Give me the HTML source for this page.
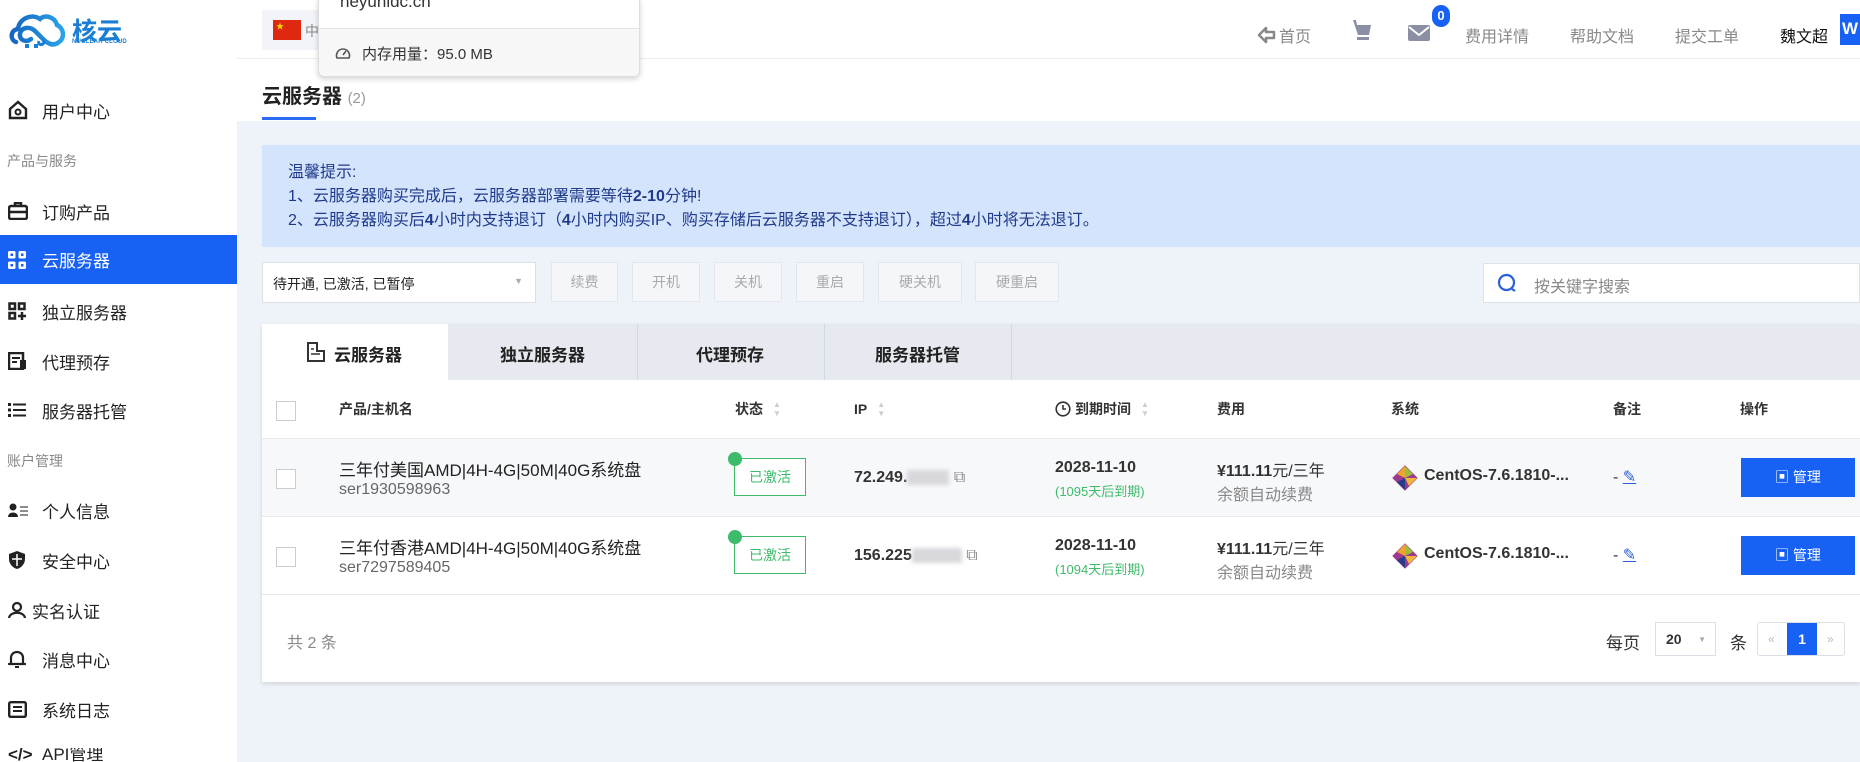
<!DOCTYPE html>
<html style="overflow:hidden;height:762px"><head><meta charset="utf-8"><style>
*{margin:0;padding:0;box-sizing:border-box}
body{width:1860px;height:762px;overflow:hidden;background:#eef2f9;font-family:"Liberation Sans","Noto Sans CJK SC",sans-serif;position:relative;color:#333}
.a{position:absolute}
.side{left:0;top:0;width:237px;height:762px;background:#fff}
.nav{left:0;width:237px;height:48px;display:flex;align-items:center;font-size:17px;color:#222}
.nav svg{position:absolute;left:8px}
.nav span{position:absolute;left:42px}
.grp{left:7px;font-size:14px;color:#888}
.hdr{left:237px;top:0;width:1623px;height:59px;background:#fff;border-bottom:1px solid #eee}
.ttl{left:237px;top:59px;width:1623px;height:62px;background:#fff}
.hl{font-size:16px;color:#888;top:23px}
.btn{top:262px;height:40px;border:1px solid #e3e6ec;background:#f4f6fa;color:#aaa;font-size:14px;display:flex;align-items:center;justify-content:center}
.th{top:380px;height:58px;font-size:14px;font-weight:bold;color:#333;display:flex;align-items:center}
.cb{width:20px;height:20px;border:1px solid #ccc;background:#fff}
.sort{display:inline-block;margin-left:10px;color:#ccc;font-size:8px;line-height:9px}
.pop{z-index:5}
</style></head><body>
<div class="a side"></div>
<!-- logo -->
<svg class="a" style="left:7px;top:11px" width="58" height="38" viewBox="0 0 58 38"><defs><linearGradient id="g" x1="0" x2="1"><stop offset="0" stop-color="#1565c0"/><stop offset="1" stop-color="#29a3e8"/></linearGradient></defs><path d="M9 31 C3 29 3 19 11 18 C12 8 24 2 33 8 C38 3 48 6 50 14 C57 17 58 27 52 31 C46 36 40 32 36 28 L28 20 C23 15 14 16 13 23 C12 29 19 32 24 28" fill="none" stroke="url(#g)" stroke-width="4.5" stroke-linecap="round"/><rect x="18" y="33" width="4" height="4" fill="#1a7fd4"/><rect x="27" y="33" width="4" height="4" fill="#1a7fd4"/><path d="M36 28 C40 34 30 36 32 30" fill="none" stroke="#1a7fd4" stroke-width="3"/></svg>
<div class="a" style="left:72px;top:12px;font-size:25px;color:#1a7fd4;font-weight:bold;letter-spacing:0">核云</div>
<div class="a" style="left:72px;top:39px;font-size:6px;color:#1a7fd4;font-weight:bold;letter-spacing:.2px">NUCLEAR CLOUD</div>

<div class="a hdr"></div>
<div class="a" style="left:262px;top:10px;width:60px;height:40px;background:#f2f4fa"></div>
<div class="a" style="left:273px;top:20px;width:28px;height:20px;background:#de2910"></div>
<div class="a" style="left:276px;top:21px;color:#ffde00;font-size:8px">★</div>
<div class="a" style="left:305px;top:21px;font-size:14px;color:#888">中</div>
<!-- popup -->
<div class="a pop" style="left:318px;top:-4px;width:322px;height:81px;background:#f7f7f7;border:1px solid #ddd;border-radius:6px;box-shadow:0 2px 6px rgba(0,0,0,.18)"></div>
<div class="a pop" style="left:319px;top:0;width:320px;height:29px;background:#fff;border-bottom:1px solid #e4e4e4"></div>
<div class="a pop" style="left:340px;top:-8px;font-size:17px;color:#333">heyunidc.cn</div>
<svg class="a pop" style="left:335px;top:46px" width="16" height="14" viewBox="0 0 16 14"><path d="M2 12 A6.5 6.5 0 1 1 14 12 Z" fill="none" stroke="#555" stroke-width="1.6"/><path d="M8 9 L11 5" stroke="#555" stroke-width="1.6"/></svg>
<div class="a pop" style="left:362px;top:43px;font-size:15px;color:#333">内存用量：95.0 MB</div>

<!-- header right -->
<svg class="a" style="left:1257px;top:26px" width="20" height="18" viewBox="0 0 20 18"><path d="M9 2 L2 9 L9 16 V12 H17 V6 H9 Z" fill="none" stroke="#888" stroke-width="2.5" stroke-linejoin="round"/></svg>
<div class="a hl" style="left:1279px">首页</div>
<svg class="a" style="left:1352px;top:19px" width="20" height="22" viewBox="0 0 20 22"><path d="M1 1 H4 L5 6 H19 L17 16 H6 Z" fill="#8a8fa3"/><rect x="5" y="18" width="12" height="3" fill="#8a8fa3"/></svg>
<svg class="a" style="left:1408px;top:25px" width="22" height="16" viewBox="0 0 22 16"><rect width="22" height="16" rx="2" fill="#8a8fa3"/><path d="M1 2 L11 10 L21 2" fill="none" stroke="#fff" stroke-width="2"/></svg>
<div class="a" style="left:1432px;top:5px;width:18px;height:22px;border-radius:9px;background:#1761f5;color:#fff;font-size:13px;font-weight:bold;text-align:center;line-height:22px">0</div>
<div class="a hl" style="left:1465px">费用详情</div>
<div class="a hl" style="left:1570px">帮助文档</div>
<div class="a hl" style="left:1675px">提交工单</div>
<div class="a" style="left:1780px;top:23px;font-size:16px;color:#111">魏文超</div>
<div class="a" style="left:1840px;top:14px;width:20px;height:31px;background:#1761f5;color:#fff;font-weight:bold;font-size:17px;padding:5px 0 0 2px">W</div>

<!-- title -->
<div class="a ttl"></div>
<div class="a" style="left:262px;top:80px;font-size:20px;font-weight:bold;color:#222">云服务器 <span style="font-size:15px;color:#999;font-weight:normal">(2)</span></div>
<div class="a" style="left:262px;top:117px;width:54px;height:3px;background:#2b6bf3"></div>

<!-- sidebar items -->
<div class="a nav" style="top:86px"><svg width="20" height="20" viewBox="0 0 20 20"><path d="M2 9 L10 2 L18 9 V18 H2 Z" fill="none" stroke="#222" stroke-width="2.4"/><circle cx="10" cy="12" r="2.5" fill="none" stroke="#222" stroke-width="2"/></svg><span>用户中心</span></div>
<div class="a grp" style="top:151px">产品与服务</div>
<div class="a nav" style="top:187px"><svg width="20" height="18" viewBox="0 0 20 18"><rect x="1" y="4" width="18" height="13" rx="2" fill="none" stroke="#222" stroke-width="2.5"/><path d="M7 4 V1 H13 V4 M1 10 H19" stroke="#222" stroke-width="2.5" fill="none"/></svg><span>订购产品</span></div>
<div class="a nav" style="top:235px;background:#1761f5;color:#fff;height:49px"><svg width="18" height="18" viewBox="0 0 18 18"><g fill="#fff"><rect x="0" y="0" width="7.5" height="7.5" rx="1.5"/><rect x="10.5" y="0" width="7.5" height="7.5" rx="1.5"/><rect x="0" y="10.5" width="7.5" height="7.5" rx="1.5"/><rect x="10.5" y="10.5" width="7.5" height="7.5" rx="1.5"/></g><g fill="#1761f5"><rect x="2.5" y="2.5" width="2.5" height="2.5"/><rect x="13" y="2.5" width="2.5" height="2.5"/><rect x="2.5" y="13" width="2.5" height="2.5"/><rect x="13" y="13" width="2.5" height="2.5"/></g></svg><span>云服务器</span></div>
<div class="a nav" style="top:287px"><svg width="18" height="18" viewBox="0 0 18 18"><g fill="none" stroke="#222" stroke-width="2.5"><rect x="1.5" y="1.5" width="5.5" height="5.5"/><rect x="11" y="1.5" width="5.5" height="5.5"/><rect x="1.5" y="11" width="5.5" height="5.5"/><path d="M14 10 V18 M10 14 H18"/></g></svg><span>独立服务器</span></div>
<div class="a nav" style="top:337px"><svg width="19" height="18" viewBox="0 0 19 18"><rect x="1" y="1" width="14" height="16" fill="none" stroke="#222" stroke-width="2.5"/><rect x="12" y="8" width="6" height="9" fill="#222"/><path d="M4 6 H12 M4 10 H9" stroke="#222" stroke-width="2"/></svg><span>代理预存</span></div>
<div class="a nav" style="top:386px"><svg width="18" height="14" viewBox="0 0 18 14"><g fill="#222"><rect y="0" width="3" height="3"/><rect y="5.5" width="3" height="3"/><rect y="11" width="3" height="3"/><rect x="5" y="0.5" width="13" height="2"/><rect x="5" y="6" width="13" height="2"/><rect x="5" y="11.5" width="13" height="2"/></g></svg><span>服务器托管</span></div>
<div class="a grp" style="top:451px">账户管理</div>
<div class="a nav" style="top:486px"><svg width="20" height="14" viewBox="0 0 20 14"><circle cx="5" cy="4" r="3.5" fill="#222"/><path d="M0 14 C0 8 10 8 10 14 Z" fill="#222"/><path d="M12 4 H20 M12 8 H20 M12 12 H20" stroke="#666" stroke-width="1.5"/></svg><span>个人信息</span></div>
<div class="a nav" style="top:536px"><svg width="18" height="20" viewBox="0 0 18 20"><path d="M9 1 L17 4 V9 C17 14 13 18 9 19 C5 18 1 14 1 9 V4 Z" fill="#222"/><path d="M9 4 V16 M4 9 H14" stroke="#fff" stroke-width="1.5"/></svg><span>安全中心</span></div>
<div class="a nav" style="top:586px"><svg width="18" height="18" viewBox="0 0 18 18"><circle cx="9" cy="6" r="4" fill="none" stroke="#222" stroke-width="2.2"/><path d="M1 17 C2 10 16 10 17 17" fill="none" stroke="#222" stroke-width="2.2"/></svg><span style="left:32px">实名认证</span></div>
<div class="a nav" style="top:635px"><svg width="18" height="19" viewBox="0 0 18 19"><path d="M3 14 V8 C3 4 6 2 9 2 C12 2 15 4 15 8 V14 H17 H1 Z" fill="none" stroke="#222" stroke-width="2.2" stroke-linejoin="round"/><path d="M7 17 H11" stroke="#222" stroke-width="2"/></svg><span>消息中心</span></div>
<div class="a nav" style="top:685px"><svg width="19" height="17" viewBox="0 0 19 17"><rect x="1.2" y="1.2" width="16.6" height="14.6" rx="1.5" fill="none" stroke="#222" stroke-width="2.4"/><path d="M5 6 H14 M5 10 H14" stroke="#222" stroke-width="2"/></svg><span>系统日志</span></div>
<div class="a" style="left:8px;top:748px;font-size:17px;color:#222;font-weight:bold;line-height:14px;height:14px;overflow:hidden">&lt;/&gt;</div>
<div class="a" style="left:42px;top:748px;font-size:17px;color:#222;line-height:14px;height:14px;overflow:hidden">API管理</div>

<!-- notice -->
<div class="a" style="left:262px;top:145px;width:1598px;height:102px;background:#d4e4fd"></div>
<div class="a" style="left:288px;top:161px;font-size:16px;color:#1f3a8a;line-height:24px">温馨提示:<br>1、云服务器购买完成后，云服务器部署需要等待<b>2-10</b>分钟!<br>2、云服务器购买后<b>4</b>小时内支持退订（<b>4</b>小时内购买IP、购买存储后云服务器不支持退订），超过<b>4</b>小时将无法退订。</div>

<!-- filter -->
<div class="a" style="left:262px;top:262px;width:274px;height:41px;background:#fff;border:1px solid #dcdfe6;font-size:14px;color:#222;padding:11px 10px">待开通, 已激活, 已暂停<span style="position:absolute;right:12px;top:13px;color:#aaa;font-size:9px">▼</span></div>
<div class="a btn" style="left:551px;width:67px">续费</div>
<div class="a btn" style="left:632px;width:68px">开机</div>
<div class="a btn" style="left:714px;width:68px">关机</div>
<div class="a btn" style="left:796px;width:68px">重启</div>
<div class="a btn" style="left:878px;width:84px">硬关机</div>
<div class="a btn" style="left:975px;width:84px">硬重启</div>
<div class="a" style="left:1483px;top:263px;width:377px;height:40px;background:#fff;border:1px solid #dde1e8"></div>
<svg class="a" style="left:1497px;top:273px" width="20" height="20" viewBox="0 0 20 20"><circle cx="9.5" cy="9.5" r="7.5" fill="none" stroke="#2b5fd9" stroke-width="2.2"/><path d="M15 16 L18 18" stroke="#2b5fd9" stroke-width="2.2"/></svg>
<div class="a" style="left:1534px;top:273px;font-size:16px;color:#888">按关键字搜索</div>

<!-- card -->
<div class="a" style="left:262px;top:324px;width:1598px;height:358px;background:#fff;box-shadow:0 2px 4px rgba(0,0,0,.12)"></div>
<div class="a" style="left:262px;top:324px;width:1598px;height:56px;background:#e6e9ef"></div>
<div class="a" style="left:262px;top:324px;width:186px;height:56px;background:#fff"></div>
<div class="a" style="left:637px;top:324px;width:1px;height:56px;background:#d4d8e0"></div>
<div class="a" style="left:824px;top:324px;width:1px;height:56px;background:#d4d8e0"></div>
<div class="a" style="left:1011px;top:324px;width:1px;height:56px;background:#d4d8e0"></div>
<svg class="a" style="left:307px;top:342px" width="18" height="20" viewBox="0 0 18 20"><path d="M1 1 H10 V9 H17 V19 H1 Z M10 9 V1" fill="none" stroke="#333" stroke-width="2"/><path d="M4 7 H7 M4 12 H13" stroke="#333" stroke-width="1.6"/></svg>
<div class="a" style="left:334px;top:341px;font-size:17px;font-weight:bold;color:#222">云服务器</div>
<div class="a" style="left:500px;top:341px;font-size:17px;font-weight:bold;color:#222">独立服务器</div>
<div class="a" style="left:696px;top:341px;font-size:17px;font-weight:bold;color:#222">代理预存</div>
<div class="a" style="left:875px;top:341px;font-size:17px;font-weight:bold;color:#222">服务器托管</div>

<div class="a cb" style="left:276px;top:401px"></div>
<div class="a th" style="left:339px">产品/主机名</div>
<div class="a th" style="left:735px">状态<span class="sort">▲<br>▼</span></div>
<div class="a th" style="left:854px">IP<span class="sort">▲<br>▼</span></div>
<div class="a th" style="left:1055px"><svg width="16" height="16" viewBox="0 0 16 16" style="margin-right:4px"><circle cx="8" cy="8" r="6.8" fill="none" stroke="#333" stroke-width="1.6"/><path d="M8 4 V8 H11" fill="none" stroke="#333" stroke-width="1.6"/></svg>到期时间<span class="sort">▲<br>▼</span></div>
<div class="a th" style="left:1217px">费用</div>
<div class="a th" style="left:1391px">系统</div>
<div class="a th" style="left:1613px">备注</div>
<div class="a th" style="left:1740px">操作</div>

<!-- rows -->
<div class="a" style="left:262px;top:438px;width:1598px;height:79px;background:#f6f8fa;border-top:1px solid #e6e8ec;border-bottom:1px solid #e6e8ec"></div>
<div class="a" style="left:262px;top:594px;width:1598px;height:1px;background:#e6e8ec"></div>

<div class="a cb" style="left:276px;top:469px"></div>
<div class="a" style="left:339px;top:456px;font-size:17px;color:#222">三年付美国AMD|4H-4G|50M|40G系统盘</div>
<div class="a" style="left:339px;top:481px;font-size:16px;color:#666">ser1930598963</div>
<div class="a" style="left:734px;top:458px;width:72px;height:38px;border:1px solid #3dbb6a;color:#3dbb6a;font-size:14px;text-align:center;line-height:36px;background:#fff">已激活</div>
<div class="a" style="left:728px;top:452px;width:14px;height:14px;border-radius:50%;background:#3dbb6a"></div>
<div class="a" style="left:854px;top:469px;font-size:16px;color:#333;font-weight:bold">72.249.<span style="display:inline-block;width:42px;height:15px;background:#d8d8dc;vertical-align:middle;filter:blur(2px)"></span> <span style="font-weight:normal;color:#888">⧉</span></div>
<div class="a" style="left:1055px;top:459px;font-size:16px;color:#333;font-weight:bold">2028-11-10</div>
<div class="a" style="left:1055px;top:481px;font-size:13px;color:#3dbb6a">(1095天后到期)</div>
<div class="a" style="left:1217px;top:457px;font-size:16px;color:#333"><b>¥111.11</b>元/三年</div>
<div class="a" style="left:1217px;top:481px;font-size:16px;color:#888">余额自动续费</div>
<svg class="a" style="left:1392px;top:465px" width="26" height="26" viewBox="0 0 26 26"><rect x="4" y="4" width="18" height="18" transform="rotate(45 13 13)" fill="#9c3a8e"/><path d="M13 1 L21 9 L13 13 Z" fill="#9bbf3a"/><path d="M25 13 L17 21 L13 13 Z" fill="#f0b73a"/><path d="M13 25 L5 17 L13 13 Z" fill="#263c8a"/><path d="M13 13 L13 1 L5 9 Z" fill="#efa330"/></svg>
<div class="a" style="left:1424px;top:467px;font-size:16px;color:#333;font-weight:bold">CentOS-7.6.1810-...</div>
<div class="a" style="left:1613px;top:467px;font-size:16px;color:#333">- <span style="color:#2b5fd9;text-decoration:underline">✎</span></div>
<div class="a" style="left:1741px;top:458px;width:114px;height:39px;background:#1761f5;color:#fff;font-size:14px;text-align:center;line-height:39px">▣ 管理</div>

<div class="a cb" style="left:276px;top:547px"></div>
<div class="a" style="left:339px;top:534px;font-size:17px;color:#222">三年付香港AMD|4H-4G|50M|40G系统盘</div>
<div class="a" style="left:339px;top:559px;font-size:16px;color:#666">ser7297589405</div>
<div class="a" style="left:734px;top:536px;width:72px;height:38px;border:1px solid #3dbb6a;color:#3dbb6a;font-size:14px;text-align:center;line-height:36px;background:#fff">已激活</div>
<div class="a" style="left:728px;top:530px;width:14px;height:14px;border-radius:50%;background:#3dbb6a"></div>
<div class="a" style="left:854px;top:547px;font-size:16px;color:#333;font-weight:bold">156.225<span style="display:inline-block;width:50px;height:15px;background:#d8d8dc;vertical-align:middle;filter:blur(2px)"></span> <span style="font-weight:normal;color:#888">⧉</span></div>
<div class="a" style="left:1055px;top:537px;font-size:16px;color:#333;font-weight:bold">2028-11-10</div>
<div class="a" style="left:1055px;top:559px;font-size:13px;color:#3dbb6a">(1094天后到期)</div>
<div class="a" style="left:1217px;top:535px;font-size:16px;color:#333"><b>¥111.11</b>元/三年</div>
<div class="a" style="left:1217px;top:559px;font-size:16px;color:#888">余额自动续费</div>
<svg class="a" style="left:1392px;top:543px" width="26" height="26" viewBox="0 0 26 26"><rect x="4" y="4" width="18" height="18" transform="rotate(45 13 13)" fill="#9c3a8e"/><path d="M13 1 L21 9 L13 13 Z" fill="#9bbf3a"/><path d="M25 13 L17 21 L13 13 Z" fill="#f0b73a"/><path d="M13 25 L5 17 L13 13 Z" fill="#263c8a"/><path d="M13 13 L13 1 L5 9 Z" fill="#efa330"/></svg>
<div class="a" style="left:1424px;top:545px;font-size:16px;color:#333;font-weight:bold">CentOS-7.6.1810-...</div>
<div class="a" style="left:1613px;top:545px;font-size:16px;color:#333">- <span style="color:#2b5fd9;text-decoration:underline">✎</span></div>
<div class="a" style="left:1741px;top:536px;width:114px;height:39px;background:#1761f5;color:#fff;font-size:14px;text-align:center;line-height:39px">▣ 管理</div>

<!-- pagination -->
<div class="a" style="left:287px;top:629px;font-size:16px;color:#888">共 2 条</div>
<div class="a" style="left:1606px;top:629px;font-size:17px;color:#333">每页</div>
<div class="a" style="left:1655px;top:622px;width:61px;height:34px;border:1px solid #dcdfe6;font-size:14px;font-weight:bold;padding:8px 10px">20<span style="position:absolute;right:9px;top:12px;color:#aaa;font-size:8px">▼</span></div>
<div class="a" style="left:1730px;top:629px;font-size:17px;color:#333">条</div>
<div class="a" style="left:1757px;top:622px;width:88px;height:34px;border:1px solid #dcdfe6;border-radius:3px;font-size:12px;color:#bbb"><span style="position:absolute;left:10px;top:9px">«</span><span style="position:absolute;left:29px;top:0;width:30px;height:32px;background:#1761f5;color:#fff;font-weight:bold;font-size:14px;text-align:center;line-height:32px">1</span><span style="position:absolute;left:69px;top:9px">»</span></div>
</body></html>
